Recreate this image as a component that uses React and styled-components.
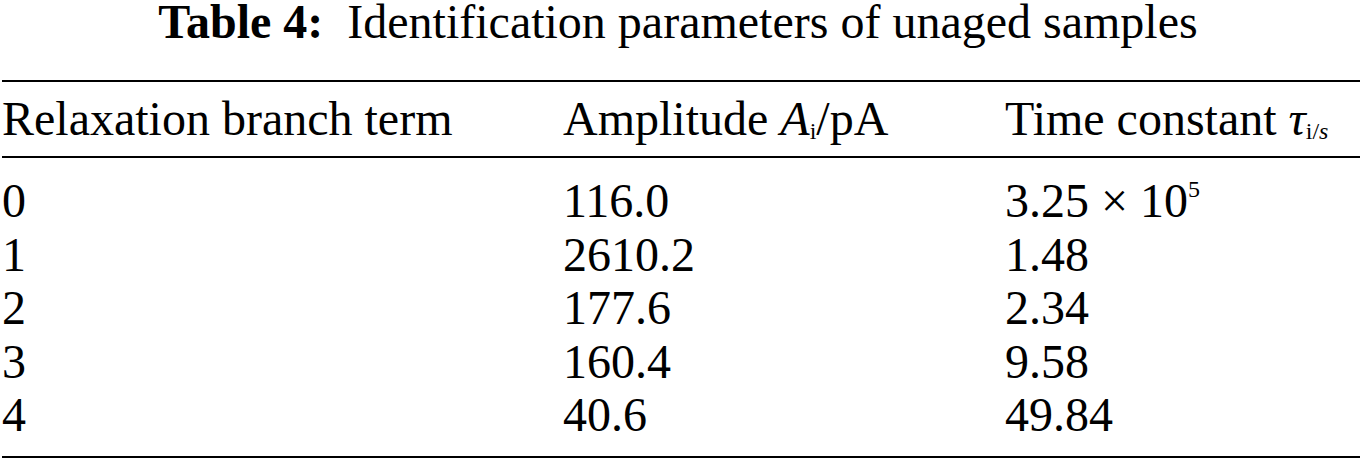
import React from "react";
import styled, { createGlobalStyle } from "styled-components";

const GlobalStyle = createGlobalStyle`
  html, body {
    margin: 0;
    padding: 0;
    background: #fff;
  }
  body {
    font-family: "Liberation Serif", "Times New Roman", serif;
    color: #000;
  }
`;

const Page = styled.div`
  width: 1367px;
  padding: 0 7px 0 2px;
  box-sizing: border-box;
`;

const Caption = styled.div`
  font-size: 48px;
  line-height: 44px;
  text-align: center;
  margin-bottom: 36px;
  padding-right: 6px;
  & b {
    font-weight: bold;
  }
`;

const Table = styled.div`
  border-top: 2px solid #000;
  border-bottom: 2px solid #000;
  font-size: 48px;
`;

const Grid = styled.div`
  display: grid;
  grid-template-columns: 561px 442px 1fr;
`;

const Head = styled(Grid)`
  line-height: 74px;
  border-bottom: 2px solid #000;
`;

const Body = styled.div`
  padding: 16px 0 14px;
`;

const Row = styled(Grid)`
  line-height: 53.5px;
`;

const Cell = styled.div`
  white-space: nowrap;
`;

const Sub = styled.sub`
  font-size: 24px;
  line-height: 0;
  vertical-align: -4px;
`;

const Sup = styled.sup`
  font-size: 24px;
  line-height: 0;
  vertical-align: 20px;
`;

const rows = [
  { term: "0", amp: "116.0", tau: "3.25 × 10", exp: "5" },
  { term: "1", amp: "2610.2", tau: "1.48" },
  { term: "2", amp: "177.6", tau: "2.34" },
  { term: "3", amp: "160.4", tau: "9.58" },
  { term: "4", amp: "40.6", tau: "49.84" },
];

export default function App() {
  return (
    <>
      <GlobalStyle />
      <Page>
        <Caption>
          <b>Table 4:</b>&nbsp; Identification parameters of unaged samples
        </Caption>
        <Table>
          <Head>
            <Cell>Relaxation branch term</Cell>
            <Cell>
              Amplitude <i>A</i>
              <Sub>i</Sub>/pA
            </Cell>
            <Cell>
              Time constant <i>τ</i>
              <Sub>
                i/<i>s</i>
              </Sub>
            </Cell>
          </Head>
          <Body>
            {rows.map((r) => (
              <Row key={r.term}>
                <Cell>{r.term}</Cell>
                <Cell>{r.amp}</Cell>
                <Cell>
                  {r.tau}
                  {r.exp && <Sup>{r.exp}</Sup>}
                </Cell>
              </Row>
            ))}
          </Body>
        </Table>
      </Page>
    </>
  );
}
